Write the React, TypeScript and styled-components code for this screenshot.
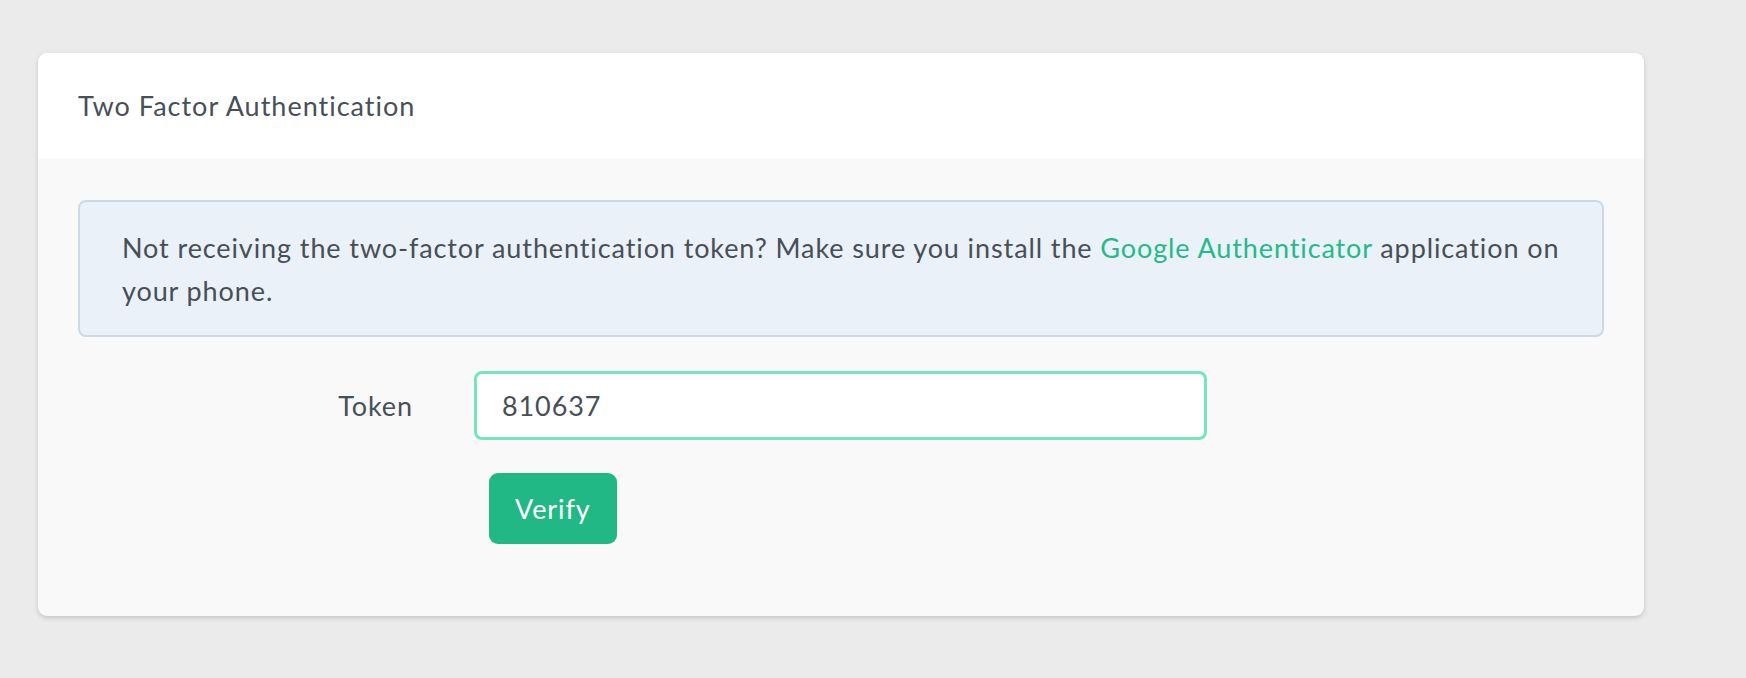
import React from 'react';
import styled, { createGlobalStyle } from 'styled-components';

const GlobalStyle = createGlobalStyle`
  html, body {
    margin: 0;
    padding: 0;
    background: #ebebeb;
  }
  body {
    font-family: Lato, "Open Sans", sans-serif;
    color: #474f57;
    letter-spacing: 0.9px;
  }
`;

const Page = styled.div`
  padding: 53px 102px 62px 38px;
`;

const Card = styled.div`
  background: #f9f9f9;
  border-radius: 9px;
  box-shadow: 0 2px 5px rgba(0, 0, 0, 0.16);
  overflow: hidden;
`;

const CardHeader = styled.div`
  background: #ffffff;
  padding: 31px 40px 32px;
  font-size: 27px;
  line-height: 43px;
  letter-spacing: 1px;
`;

const CardBody = styled.div`
  padding: 41px 40px 72px;
`;

const Alert = styled.div`
  background: #eaf1f8;
  border: 2px solid #cdd9e4;
  border-radius: 8px;
  padding: 24px 42px 23px;
  font-size: 27px;
  line-height: 43.2px;
`;

const Link = styled.a`
  color: #26b98a;
  text-decoration: none;
`;

const FormGrid = styled.div`
  display: grid;
  grid-template-columns: 335px 733px;
  column-gap: 61px;
  row-gap: 33px;
  align-items: center;
  margin-top: 34px;
`;

const Label = styled.label`
  text-align: right;
  font-size: 27px;
`;

const TokenInput = styled.input`
  box-sizing: border-box;
  width: 100%;
  height: 69px;
  padding: 0 25px;
  border: 3px solid #74e5bc;
  border-radius: 8px;
  background: #ffffff;
  font-family: inherit;
  font-size: 27px;
  letter-spacing: inherit;
  color: #474f57;
  outline: none;
`;

const ButtonCell = styled.div`
  grid-column: 2;
  padding-left: 15px;
`;

const Button = styled.button`
  height: 71px;
  padding: 0 26px;
  border: none;
  border-radius: 9px;
  background: #21b886;
  color: #ffffff;
  font-family: inherit;
  font-size: 27px;
  letter-spacing: inherit;
  cursor: pointer;
`;

export default function App() {
  return (
    <>
      <GlobalStyle />
      <Page>
        <Card>
          <CardHeader>Two Factor Authentication</CardHeader>
          <CardBody>
            <Alert>
              Not receiving the two-factor authentication token? Make sure you install the{' '}
              <Link href="#">Google Authenticator</Link> application on
              <br />
              your phone.
            </Alert>
            <FormGrid>
              <Label htmlFor="token">Token</Label>
              <TokenInput id="token" defaultValue="810637" />
              <ButtonCell>
                <Button>Verify</Button>
              </ButtonCell>
            </FormGrid>
          </CardBody>
        </Card>
      </Page>
    </>
  );
}
